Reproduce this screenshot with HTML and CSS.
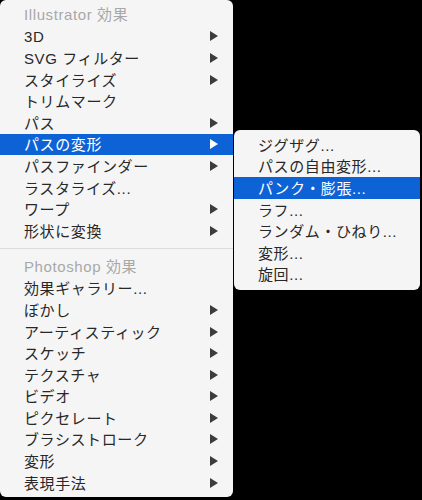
FILE: index.html
```html
<!DOCTYPE html>
<html lang="ja">
<head>
<meta charset="utf-8">
<link rel="stylesheet" href="styles.css">
</head>
<body>
<div class="stage">
  <div class="menu main">
    <div class="item header">Illustrator 効果</div>
    <div class="item"><span>3D</span><svg class="arrow" viewBox="0 0 8 10"><polygon points="0,0 8,5 0,10"/></svg></div>
    <div class="item"><span>SVG フィルター</span><svg class="arrow" viewBox="0 0 8 10"><polygon points="0,0 8,5 0,10"/></svg></div>
    <div class="item"><span>スタイライズ</span><svg class="arrow" viewBox="0 0 8 10"><polygon points="0,0 8,5 0,10"/></svg></div>
    <div class="item"><span>トリムマーク</span></div>
    <div class="item"><span>パス</span><svg class="arrow" viewBox="0 0 8 10"><polygon points="0,0 8,5 0,10"/></svg></div>
    <div class="item active"><span>パスの変形</span><svg class="arrow" viewBox="0 0 8 10"><polygon points="0,0 8,5 0,10"/></svg></div>
    <div class="item"><span>パスファインダー</span><svg class="arrow" viewBox="0 0 8 10"><polygon points="0,0 8,5 0,10"/></svg></div>
    <div class="item"><span>ラスタライズ...</span></div>
    <div class="item"><span>ワープ</span><svg class="arrow" viewBox="0 0 8 10"><polygon points="0,0 8,5 0,10"/></svg></div>
    <div class="item"><span>形状に変換</span><svg class="arrow" viewBox="0 0 8 10"><polygon points="0,0 8,5 0,10"/></svg></div>
    <div class="separator"></div>
    <div class="item header">Photoshop 効果</div>
    <div class="item"><span>効果ギャラリー...</span></div>
    <div class="item"><span>ぼかし</span><svg class="arrow" viewBox="0 0 8 10"><polygon points="0,0 8,5 0,10"/></svg></div>
    <div class="item"><span>アーティスティック</span><svg class="arrow" viewBox="0 0 8 10"><polygon points="0,0 8,5 0,10"/></svg></div>
    <div class="item"><span>スケッチ</span><svg class="arrow" viewBox="0 0 8 10"><polygon points="0,0 8,5 0,10"/></svg></div>
    <div class="item"><span>テクスチャ</span><svg class="arrow" viewBox="0 0 8 10"><polygon points="0,0 8,5 0,10"/></svg></div>
    <div class="item"><span>ビデオ</span><svg class="arrow" viewBox="0 0 8 10"><polygon points="0,0 8,5 0,10"/></svg></div>
    <div class="item"><span>ピクセレート</span><svg class="arrow" viewBox="0 0 8 10"><polygon points="0,0 8,5 0,10"/></svg></div>
    <div class="item"><span>ブラシストローク</span><svg class="arrow" viewBox="0 0 8 10"><polygon points="0,0 8,5 0,10"/></svg></div>
    <div class="item"><span>変形</span><svg class="arrow" viewBox="0 0 8 10"><polygon points="0,0 8,5 0,10"/></svg></div>
    <div class="item"><span>表現手法</span><svg class="arrow" viewBox="0 0 8 10"><polygon points="0,0 8,5 0,10"/></svg></div>
  </div>
  <div class="menu sub">
    <div class="item"><span>ジグザグ...</span></div>
    <div class="item"><span>パスの自由変形...</span></div>
    <div class="item active"><span>パンク・膨張...</span></div>
    <div class="item"><span>ラフ...</span></div>
    <div class="item"><span>ランダム・ひねり...</span></div>
    <div class="item"><span>変形...</span></div>
    <div class="item"><span>旋回...</span></div>
  </div>
</div>
</body>
</html>
```

FILE: styles.css
```css
html, body {
  margin: 0;
  padding: 0;
  background: #000;
}
body {
  width: 422px;
  height: 500px;
  overflow: hidden;
  font-family: "Liberation Sans", "Noto Sans CJK JP", sans-serif;
  font-size: 15px;
  letter-spacing: 0.6px;
  color: #282828;
}
.stage {
  position: relative;
  width: 422px;
  height: 500px;
}
.menu {
  background: #f5f5f5;
  border-radius: 6px;
  padding: 4px 0;
  box-sizing: border-box;
}
.main {
  width: 233px;
  height: 497px;
}
.sub {
  position: absolute;
  left: 234px;
  top: 130px;
  width: 186px;
  height: 160px;
}
.item {
  display: flex;
  align-items: center;
  justify-content: space-between;
  height: 21.6px;
  padding: 0 15px 0 24px;
  line-height: 1;
  white-space: nowrap;
}
.item span {
  position: relative;
  top: 0.5px;
}
.header {
  color: #a8a8a8;
}
.active {
  background: #0d63d6;
  color: #fff;
}
.arrow {
  width: 8px;
  height: 10px;
  fill: #3c3c3c;
  flex: none;
}
.active .arrow {
  fill: #fff;
}
.separator {
  height: 1px;
  background: #dcdcdc;
  margin: 6.5px 0 6.9px;
}
```
